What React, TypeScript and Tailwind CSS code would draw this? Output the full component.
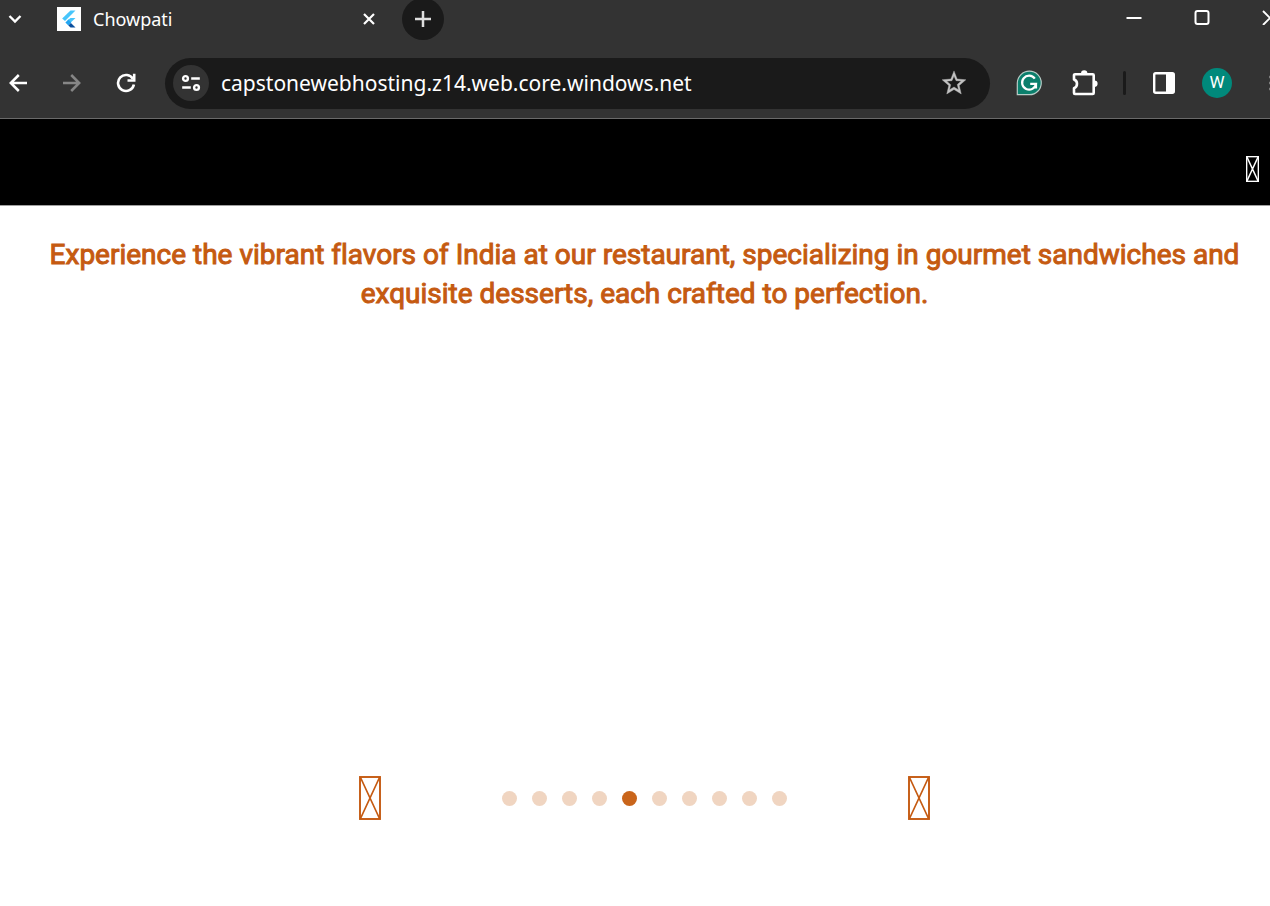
import React, { useState } from "react";

function MissingGlyph({ className, thick }: { className: string; thick?: boolean }) {
  return (
    <svg viewBox="0 0 22 44" preserveAspectRatio="none" className={className} fill="none" stroke="currentColor" aria-hidden="true">
      <rect x="1" y="1" width="20" height="42" strokeWidth={thick ? 2.6 : 1.9} />
      <path d="M1.5 1.5 20.5 42.5M20.5 1.5 1.5 42.5" strokeWidth={thick ? 2.4 : 1.7} />
    </svg>
  );
}

function TabStrip() {
  return (
    <div className="flex h-[38px] items-center text-white">
      <button aria-label="Search tabs" className="flex w-[30px] shrink-0 justify-center">
        <svg viewBox="0 0 14 10" className="h-[10px] w-[14px]" fill="none" stroke="currentColor" strokeWidth="2.4">
          <path d="M1.5 2 7 7.5 12.5 2" />
        </svg>
      </button>
      <div className="ml-[27px] flex w-[324px] items-center">
        <svg viewBox="0 0 24 24" className="size-6 shrink-0" aria-hidden="true">
          <path fill="#fff" d="M0 0h24v24H0z" />
          <path fill="#47c5fb" d="M13.500 3.500h5L8 14l-2.800-2.500z" />
          <path fill="#47c5fb" d="M13.500 11h5l-4.800 4.600-2.800-2.600z" />
          <path fill="#22a5f1" d="m8.400 15.500 2.900-2.900 3 3-2.900 2.900z" />
          <path fill="#0b4f9e" d="m11.400 18.400 2.500-2.500 4.600 4.600H13.500z" />
        </svg>
        <span className="ml-3 flex-1 text-[18px] leading-6">Chowpati</span>
        <button aria-label="Close tab" className="flex size-6 items-center justify-center">
          <svg viewBox="0 0 12 12" className="size-3" fill="none" stroke="currentColor" strokeWidth="2.200">
            <path d="m1 1 10 10M11 1 1 11" />
          </svg>
        </button>
      </div>
      <button aria-label="New tab" className="ml-[21px] flex size-[42px] shrink-0 items-center justify-center rounded-full bg-[#1a1a1a] text-[#dedede]">
        <svg viewBox="0 0 16 16" className="size-4" fill="none" stroke="currentColor" strokeWidth="2.5">
          <path d="M8 0v16M0 8h16" />
        </svg>
      </button>
      <div className="-mr-[34px] ml-auto flex shrink-0 pb-1">
        <button aria-label="Minimize" className="flex h-8 w-[68px] items-center justify-center">
          <svg viewBox="0 0 16 16" className="size-4" stroke="currentColor" strokeWidth="2">
            <path d="M.5 9h15" />
          </svg>
        </button>
        <button aria-label="Maximize" className="flex h-8 w-[68px] items-center justify-center">
          <svg viewBox="0 0 16 16" className="size-4" fill="none" stroke="currentColor" strokeWidth="2">
            <rect x="1.500" y="2" width="13" height="13" rx="2" />
          </svg>
        </button>
        <button aria-label="Close window" className="flex h-8 w-[68px] items-center justify-center">
          <svg viewBox="0 0 16 16" className="size-4" fill="none" stroke="currentColor" strokeWidth="1.900">
            <path d="m1 2 14 14M15 2 1 16" />
          </svg>
        </button>
      </div>
    </div>
  );
}

function Toolbar() {
  const [url, setUrl] = useState("capstonewebhosting.z14.web.core.windows.net");
  const nav = "flex size-9 shrink-0 items-center justify-center";
  return (
    <div className="flex h-[81px] items-center border-b border-[#6a6a6a] pt-[10px] text-white">
      <div className="flex shrink-0 gap-[18px]">
        <button aria-label="Back" className={nav}>
          <svg viewBox="0 0 18 18" className="size-[18px]" fill="none" stroke="currentColor" strokeWidth="2.5">
            <path d="M18 9H2M9.800 1 1.800 9l8 8" />
          </svg>
        </button>
        <button aria-label="Forward" className={nav + " text-[#868686]"}>
          <svg viewBox="0 0 18 18" className="size-[18px]" fill="none" stroke="currentColor" strokeWidth="2.5">
            <path d="M0 9h16M8.200 1l8 8-8 8" />
          </svg>
        </button>
        <button aria-label="Reload" className={nav}>
          <svg viewBox="0 0 20 20" className="size-5" fill="none" stroke="currentColor" strokeWidth="2.600">
            <path d="M17.900 11.500A8 8 0 1 1 17 6" />
            <path d="M18.200.800v6.700h-6.700" />
          </svg>
        </button>
      </div>
      <div className="mx-[21px] flex h-[51px] min-w-0 flex-1 items-center rounded-full bg-[#1a1a1a] px-2">
        <button aria-label="View site information" className="flex size-9 shrink-0 items-center justify-center rounded-full bg-[#333333]">
          <svg viewBox="0 0 20 18" className="h-[18px] w-5" fill="none" stroke="currentColor" strokeWidth="2.400">
            <circle cx="4.500" cy="4.500" r="2.400" />
            <path d="M10.200 4.500h8.600M1.200 13.500h8.600" />
            <circle cx="15.500" cy="13.500" r="2.400" />
          </svg>
        </button>
        <input
          aria-label="Address"
          value={url}
          onChange={(e) => setUrl(e.target.value)}
          className="ml-3 h-8 min-w-0 flex-1 bg-transparent text-[21px] leading-8 outline-none"
        />
        <button aria-label="Bookmark this page" className="mr-[10px] flex size-9 shrink-0 items-center justify-center text-[#c2c2c2]">
          <svg viewBox="0 0 24 24" className="size-[30px]" fill="currentColor" stroke="currentColor" strokeWidth=".3">
            <path d="m21.500 9.400-7-.60L12 2.300 9.500 8.800l-7 .60 5.300 4.600L6.200 20.800 12 17.200l5.800 3.600-1.600-6.800zM12 15.200l-3.600 2.200 1-4.100-3.200-2.800 4.200-.36L12 6.400l1.600 3.700 4.200.36-3.200 2.800 1 4.100z" fillRule="evenodd" />
          </svg>
        </button>
      </div>
      <div className="-mr-[18px] flex shrink-0 items-center gap-5">
        <button aria-label="Grammarly" className={nav}>
          <svg viewBox="0 0 26 26" className="size-[26px]" fill="none">
            <path d="M13.500 1.200A11.500 11.500 0 1 1 13.500 24.700H1.300V13A12 12 0 0 1 13.500 1.200z" fill="#0b7f6c" stroke="#b9cdc8" strokeWidth="1.200" />
            <path d="M18.800 8.600A7 7 0 1 0 20 13.900H14.200M20 13.500V18.500" stroke="#fff" strokeWidth="2.200" />
          </svg>
        </button>
        <button aria-label="Extensions" className={nav}>
          <svg viewBox="0 0 26 26" className="size-[26px]" fill="none">
            <path d="M3 4.200H20.700A1 1 0 0 1 21.700 5.200V23A1 1 0 0 1 20.700 24H3A1 1 0 0 1 2 23V18.300C6 16.500 6 10.800 2 9.400V5.200A1 1 0 0 1 3 4.200z" stroke="#fff" strokeWidth="2.600" strokeLinejoin="round" />
            <path d="M9 3.500a3.200 3.200 0 0 1 6.400 0zM22.500 10.600a3.100 3.100 0 0 1 0 6.200z" fill="#fff" />
          </svg>
        </button>
        <span className="h-6 w-[3px] rounded-full bg-[#1a1a1a]" />
        <button aria-label="Side panel" className={nav}>
          <svg viewBox="0 0 22 22" className="size-[22px]" fill="none">
            <rect x="1.200" y="1.200" width="19.600" height="19.600" rx="1.500" stroke="#fff" strokeWidth="2.400" />
            <path d="M13 1h8v20h-8z" fill="#fff" />
          </svg>
        </button>
        <button aria-label="Profile" className="flex size-[30px] shrink-0 items-center justify-center rounded-full bg-[#00897b] font-[Roboto] text-[17px]">
          W
        </button>
        <button aria-label="Menu" className={nav + " text-[#868686]"}>
          <svg viewBox="0 0 4 20" className="h-5 w-[3px]" fill="currentColor">
            <circle cx="2" cy="2" r="2" />
            <circle cx="2" cy="10" r="2" />
            <circle cx="2" cy="18" r="2" />
          </svg>
        </button>
      </div>
    </div>
  );
}

export default function App() {
  const [active, setActive] = useState(4);
  const total = 10;
  return (
    <div className="min-h-screen overflow-hidden bg-white">
      <header className="overflow-hidden bg-[#333333] font-['Noto_Sans',sans-serif]">
        <TabStrip />
        <Toolbar />
      </header>
      <nav className="flex h-[87px] items-center justify-end border-b border-[#a0a0a0] bg-black pt-[14px] pr-[11px] text-white">
        <button aria-label="Open menu">
          <MissingGlyph thick className="h-[26px] w-[13px]" />
        </button>
      </nav>
      <main className="pt-[29px] pl-[19px] text-[#c55a11]">
        <h1 className="text-center font-[Roboto,sans-serif] text-[28px] leading-[39px] font-normal [font-variant-ligatures:none] [-webkit-text-stroke:1px_#c55a11]">
          Experience the vibrant flavors of India at our restaurant, specializing in gourmet sandwiches and exquisite desserts, each crafted to perfection.
        </h1>
        <div className="mt-[463px] flex items-center justify-center gap-[121px]">
          <button aria-label="Previous slide" onClick={() => setActive((active + total - 1) % total)}>
            <MissingGlyph className="h-11 w-[22px]" />
          </button>
          <div className="flex gap-[15px]">
            {Array.from({ length: total }, (_, i) => (
              <button
                key={i}
                aria-label={"Slide " + (i + 1)}
                onClick={() => setActive(i)}
                className={i === active ? "size-[15px] rounded-full bg-[#c9651b]" : "size-[15px] rounded-full bg-[#f0d5c1]"}
              />
            ))}
          </div>
          <button aria-label="Next slide" onClick={() => setActive((active + 1) % total)}>
            <MissingGlyph className="h-11 w-[22px]" />
          </button>
        </div>
      </main>
    </div>
  );
}
